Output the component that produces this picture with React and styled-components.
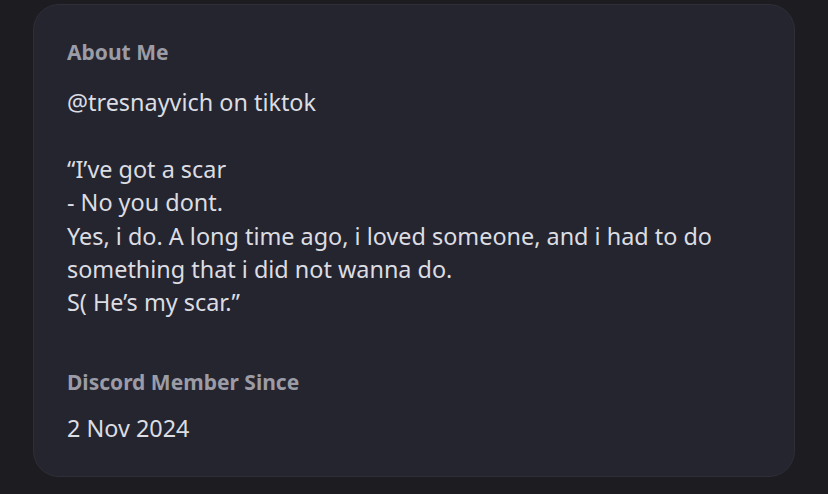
import React from "react";
import styled, { createGlobalStyle } from "styled-components";

const GlobalStyle = createGlobalStyle`
  html, body {
    margin: 0;
    padding: 0;
    background-color: #1c1c21;
  }
  body {
    font-family: "Noto Sans", "Open Sans", sans-serif;
  }
`;

const aboutLines = [
  "@tresnayvich on tiktok",
  "",
  "\u201cI\u2019ve got a scar",
  "- No you dont.",
  "Yes, i do. A long time ago, i loved someone, and i had to do",
  "something that i did not wanna do.",
  "S( He\u2019s my scar.\u201d",
];

export default function App() {
  return (
    <Page>
      <GlobalStyle />
      <Card>
        <Section>
          <Heading>About Me</Heading>
          <Body>
            {aboutLines.map((line, i) => (
              <Line key={i}>{line || "\u00a0"}</Line>
            ))}
          </Body>
        </Section>
        <Section gap="17px">
          <Heading>Discord Member Since</Heading>
          <Body>
            <Line>2 Nov 2024</Line>
          </Body>
        </Section>
      </Card>
    </Page>
  );
}

const Page = styled.div`
  width: 828px;
  height: 494px;
  box-sizing: border-box;
  padding: 4px 33px 17px 33px;
  background-color: #1c1c21;
`;

const Card = styled.div`
  box-sizing: border-box;
  height: 473px;
  padding: 34px 34px 0 33px;
  background-color: #252530;
  border: 1px solid #2e2e39;
  border-radius: 26px;
  display: flex;
  flex-direction: column;
  gap: 49px;
`;

const Section = styled.div`
  display: flex;
  flex-direction: column;
  gap: ${(p) => p.gap || "21px"};
`;

const Heading = styled.div`
  font-size: 21px;
  font-weight: 700;
  line-height: 26px;
  color: #9b9ca5;
`;

const Body = styled.div`
  font-size: 23.4px;
  line-height: 33.4px;
  color: #dcdde2;
`;

const Line = styled.div`
  white-space: pre;
`;
